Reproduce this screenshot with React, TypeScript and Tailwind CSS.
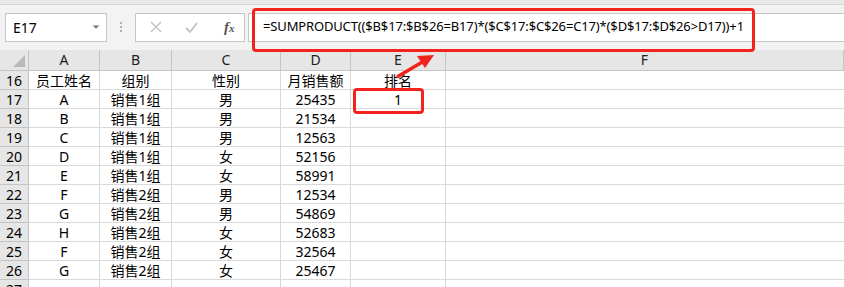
import { ChevronDown } from "lucide-react";

const rows = [
  ["16", "员工姓名", "组别", "性别", "月销售额", "排名"],
  ["17", "A", "销售1组", "男", "25435", "1"],
  ["18", "B", "销售1组", "男", "21534", ""],
  ["19", "C", "销售1组", "男", "12563", ""],
  ["20", "D", "销售1组", "女", "52156", ""],
  ["21", "E", "销售1组", "女", "58991", ""],
  ["22", "F", "销售2组", "男", "12534", ""],
  ["23", "G", "销售2组", "男", "54869", ""],
  ["24", "H", "销售2组", "女", "52683", ""],
  ["25", "F", "销售2组", "女", "32564", ""],
  ["26", "G", "销售2组", "女", "25467", ""],
  ["27", "", "", "", "", ""],
];

const cols = "grid grid-cols-[29px_71px_72px_109px_70px_95px_1fr]";

export default function App() {
  return (
    <div className="relative w-[844px] h-[287px] overflow-hidden bg-white font-['Noto_Sans','Noto_Sans_CJK_SC',sans-serif] text-[14px] text-black">
      {/* top strip */}
      <div className="h-[5px] bg-[#e9e9e9] border-b border-[#d6d6d6]" />

      {/* formula bar */}
      <div className="flex items-center h-[45px] bg-[#f3f3f3] pl-[5px] pb-[1px]">
        <div className="flex items-center justify-between w-[102px] h-[29px] bg-white border border-[#c6c6c6] pl-[7px] pr-[4px] text-[14px]">
          <span>E17</span>
          <ChevronDown className="w-[12px] h-[12px] text-[#777] fill-[#777]" strokeWidth={1} />
        </div>
        <div className="flex flex-col gap-[2px] mx-[13px]">
          <span className="w-[2px] h-[2px] bg-[#b0b0b0]" />
          <span className="w-[2px] h-[2px] bg-[#b0b0b0]" />
          <span className="w-[2px] h-[2px] bg-[#b0b0b0]" />
        </div>
        <div className="flex items-center w-[110px] h-[29px] bg-white border border-[#c6c6c6]">
          <svg width="12" height="12" viewBox="0 0 12 12" className="ml-[14px]">
            <path d="M1 1L11 11M11 1L1 11" stroke="#c2c2c2" strokeWidth="1.4" />
          </svg>
          <svg width="13" height="11" viewBox="0 0 13 11" className="ml-[23px]">
            <path d="M1 6L5 10L12 1" stroke="#c2c2c2" strokeWidth="1.8" fill="none" />
          </svg>
          <span className="ml-[26px] font-['Liberation_Serif',serif] italic font-bold text-[15px] text-[#555] leading-none">
            f<span className="text-[11px]">x</span>
          </span>
        </div>
        <div className="flex items-center flex-1 h-[29px] ml-[3px] bg-white border border-[#c6c6c6] border-r-0 pl-[14px] text-[13px] tracking-[-0.15px]">
          =SUMPRODUCT(($B$17:$B$26=B17)*($C$17:$C$26=C17)*($D$17:$D$26&gt;D17))+1
        </div>
      </div>

      {/* column headers */}
      <div className={`${cols} h-[21px] bg-[#e6e6e6] border-b border-[#c4c4c4] text-[#222]`}>
        <div className="relative border-r border-[#c4c4c4]">
          <svg width="12" height="12" viewBox="0 0 12 12" className="absolute right-[3px] bottom-[3px]">
            <path d="M12 0L12 12L0 12Z" fill="#b9b9b9" />
          </svg>
        </div>
        {["A", "B", "C", "D", "E", "F"].map((c) => (
          <div key={c} className="flex items-center justify-center border-r border-[#c4c4c4] leading-none">
            {c}
          </div>
        ))}
      </div>

      {/* rows */}
      {rows.map((r) => (
        <div key={r[0]} className={`${cols} h-[19px]`}>
          <div className="flex items-center justify-center pt-[1px] bg-[#e6e6e6] border-r border-b border-[#c4c4c4] leading-none">
            {r[0]}
          </div>
          {r.slice(1).map((v, i) => (
            <div key={i} className="flex items-center justify-center pt-[1px] border-r border-b border-[#d9d9d9] leading-none whitespace-nowrap">
              {v}
            </div>
          ))}
          <div className="border-b border-[#d9d9d9]" />
        </div>
      ))}

      {/* annotations */}
      <div className="absolute left-[252px] top-[8px] w-[503px] h-[44px] border-[3px] border-[#f2231d] rounded-[4px]" />
      <div className="absolute left-[353px] top-[88px] w-[71px] h-[26px] border-[3px] border-[#f2231d] rounded-[4px]" />
      <svg className="absolute left-0 top-0" width="844" height="287">
        <line x1="397" y1="77" x2="424" y2="61" stroke="#f2231d" strokeWidth="3.5" />
        <path d="M434 55L417 56L425 68Z" fill="#f2231d" />
      </svg>
    </div>
  );
}
